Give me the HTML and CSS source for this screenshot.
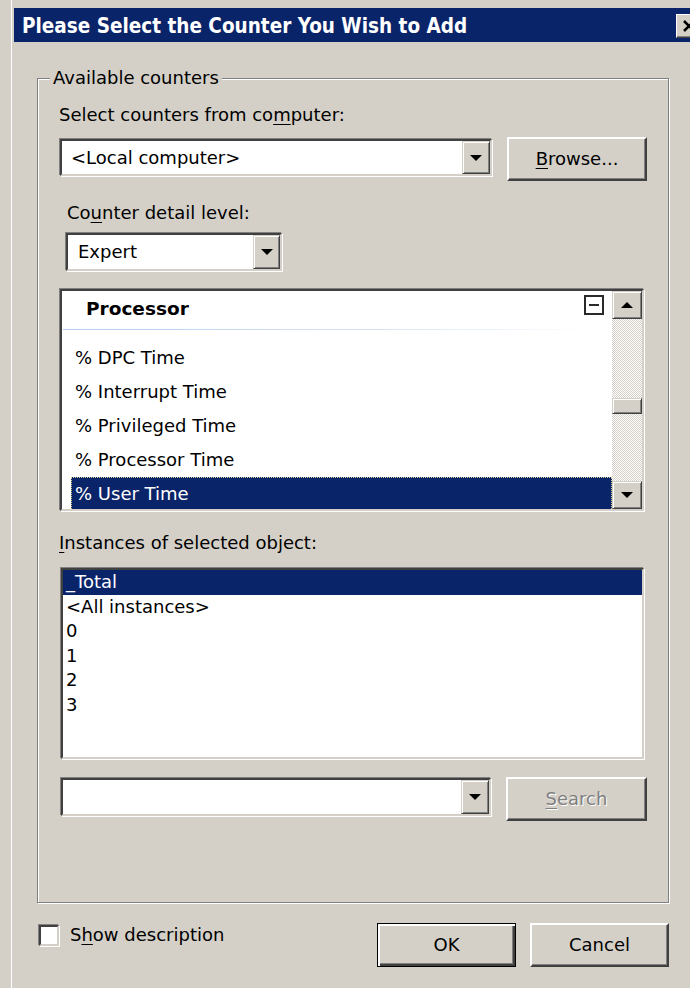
FILE: index.html
```html
<!DOCTYPE html>
<html>
<head>
<meta charset="utf-8">
<title>Add Counters</title>
<link rel="stylesheet" href="styles.css">
</head>
<body>
<div class="window">
  <div class="titlebar">
    <span class="title">Please Select the Counter You Wish to Add</span>
    <span class="close-btn">
      <svg width="14" height="12" viewBox="0 0 14 12"><path d="M2 1L12 11M12 1L2 11" stroke="#000" stroke-width="2.6" fill="none"/></svg>
    </span>
  </div>

  <div class="client">
    <fieldset class="group">
      <legend>Available counters</legend>

      <div class="label first">Select counters from co<u>m</u>puter:</div>
      <div class="row">
        <div class="combo sunken combo-machine">
          <span class="combo-text">&lt;Local computer&gt;</span>
          <span class="drop raised"><svg width="12" height="6" viewBox="0 0 12 6"><path d="M0 0H12L6 6Z"/></svg></span>
        </div>
        <div class="btn btn-browse"><u>B</u>rowse...</div>
      </div>

      <div class="label detail">Co<u>u</u>nter detail level:</div>
      <div class="combo sunken combo-level">
        <span class="combo-text">Expert</span>
        <span class="drop raised"><svg width="12" height="6" viewBox="0 0 12 6"><path d="M0 0H12L6 6Z"/></svg></span>
      </div>

      <div class="listbox sunken counters">
        <div class="list-body">
          <div class="obj-header">
            <span class="obj-name">Processor</span>
            <svg class="collapse" width="20" height="20" viewBox="0 0 20 20"><rect x="1" y="1" width="18" height="18" fill="#fff" stroke="#2a2a2a" stroke-width="2"/><path d="M5 10H15" stroke="#2a2a2a" stroke-width="2"/></svg>
          </div>
          <div class="obj-sep"></div>
          <div class="item">% DPC Time</div>
          <div class="item">% Interrupt Time</div>
          <div class="item">% Privileged Time</div>
          <div class="item">% Processor Time</div>
          <div class="item selected">% User Time</div>
        </div>
        <div class="vscroll">
          <span class="sb-btn raised"><svg width="12" height="6" viewBox="0 0 12 6"><path d="M6 0L12 6H0Z"/></svg></span>
          <div class="sb-track"><span class="sb-thumb raised"></span></div>
          <span class="sb-btn raised"><svg width="12" height="6" viewBox="0 0 12 6"><path d="M0 0H12L6 6Z"/></svg></span>
        </div>
      </div>

      <div class="label instances-label"><u>I</u>nstances of selected object:</div>
      <div class="listbox sunken instances">
        <div class="inst selected">_Total</div>
        <div class="inst">&lt;All instances&gt;</div>
        <div class="inst">0</div>
        <div class="inst">1</div>
        <div class="inst">2</div>
        <div class="inst">3</div>
      </div>

      <div class="row search-row">
        <div class="combo sunken combo-search">
          <span class="combo-text"></span>
          <span class="drop raised"><svg width="12" height="6" viewBox="0 0 12 6"><path d="M0 0H12L6 6Z"/></svg></span>
        </div>
        <div class="btn btn-search disabled"><u>S</u>earch</div>
      </div>
    </fieldset>

    <div class="footer">
      <div class="check">
        <span class="checkbox sunken"></span>
        <span class="check-label">S<u>h</u>ow description</span>
      </div>
      <div class="buttons">
        <div class="btn btn-default">OK</div>
        <div class="btn">Cancel</div>
      </div>
    </div>
  </div>
</div>
</body>
</html>
```

FILE: styles.css
```css
* {
  box-sizing: border-box;
}

html,
body {
  margin: 0;
}

body {
  width: 690px;
  height: 988px;
  overflow: hidden;
  background: #d4d0c8;
  color: #000;
  font-family: "DejaVu Sans", sans-serif;
  font-size: 18px;
  line-height: 20px;
}

u {
  text-decoration-thickness: 1px;
  text-underline-offset: 3px;
}

/* ---------- window frame ---------- */
.window {
  width: 697px;
  height: 988px;
  margin-left: 11px;
  padding: 8px 3px 0 2px;
  border-left: 1px solid #fff;
}

.titlebar {
  height: 34px;
  display: flex;
  align-items: center;
  padding: 1px 3px 0 8px;
  background: #0a246a;
}

.title {
  flex: 1;
  color: #fff;
  font-family: "DejaVu Sans Condensed", "DejaVu Sans", sans-serif;
  font-weight: bold;
  font-size: 20.5px;
  white-space: nowrap;
}

.close-btn {
  width: 26px;
  height: 24px;
  display: flex;
  align-items: center;
  justify-content: center;
  background: #d4d0c8;
  border: 1px solid;
  border-color: #fff #404040 #404040 #fff;
  box-shadow: inset -1px -1px #808080;
}

/* ---------- 3D edges ---------- */
.sunken {
  background: #fff;
  border: 2px solid;
  border-color: #404040 #d4d0c8 #d4d0c8 #404040;
  box-shadow: -1px -1px #808080, 1px 1px #fff;
}

.raised {
  background: #d4d0c8;
  border: 1px solid;
  border-color: #d4d0c8 #404040 #404040 #d4d0c8;
  box-shadow: inset 1px 1px #fff, inset -1px -1px #808080;
}

/* ---------- client area ---------- */
.client {
  padding: 26px 36px 0 23px;
}

.group {
  margin: 0;
  min-width: 0;
  padding: 0 21px 81px;
  border: 1px solid #808080;
  box-shadow: inset 1px 1px #fff, 1px 1px #fff;
}

.group legend {
  margin-left: -9px;
  padding: 0 3px;
  line-height: 20px;
  background: #d4d0c8;
}

.label.first {
  margin-top: 17px;
}

.label.detail {
  margin-top: 22px;
  margin-left: 8px;
}

.label.instances-label {
  margin-top: 22px;
}

.row {
  display: flex;
  align-items: flex-start;
  justify-content: space-between;
  margin-top: 12px;
}

/* ---------- combo boxes ---------- */
.combo {
  display: flex;
  align-items: stretch;
}

.combo-text {
  flex: 1;
  display: flex;
  align-items: center;
  padding-left: 9px;
  white-space: nowrap;
}

.drop {
  width: 28px;
  display: flex;
  align-items: center;
  justify-content: center;
}

.combo-machine {
  width: 432px;
  height: 37px;
  margin: 2px 0 0 1px;
}

.combo-level {
  width: 216px;
  height: 38px;
  margin: 10px 0 0 7px;
}

.combo-level .combo-text {
  padding-left: 10px;
}

.combo-level .drop {
  width: 27px;
}

.combo-search {
  width: 430px;
  height: 38px;
  margin: 1px 0 0 2px;
}

/* ---------- push buttons ---------- */
.btn {
  height: 44px;
  width: 139px;
  display: flex;
  align-items: center;
  justify-content: center;
  background: #d4d0c8;
  border: 2px solid;
  border-color: #fff #404040 #404040 #fff;
  box-shadow: inset -1px -1px #808080;
  white-space: nowrap;
}

.btn-browse {
  width: 140px;
}

.btn-search {
  width: 141px;
}

.btn.disabled {
  color: #808080;
  text-shadow: 1px 1px #fff;
}

.btn-default {
  border: 1px solid #000;
  box-shadow: inset 2px 2px #fff, inset -2px -2px #404040, inset -3px -3px #808080;
}

/* ---------- counter list ---------- */
.listbox {
  overflow: hidden;
}

.counters {
  display: flex;
  width: 584px;
  height: 222px;
  margin: 18px 0 0 1px;
}

.list-body {
  flex: 1;
  min-width: 0;
  overflow: hidden;
}

.obj-header {
  height: 36px;
  display: flex;
  align-items: center;
  padding: 0 8px 0 24px;
}

.obj-name {
  flex: 1;
  font-weight: bold;
  font-size: 18.5px;
}

.collapse {
  align-self: flex-start;
  margin-top: 4px;
}

.obj-sep {
  height: 1px;
  margin: 2px 17px 0 1px;
  background: linear-gradient(to right, #b5cdef, #d8e5f7 60%, #fff);
}

.obj-sep + .item {
  margin-top: 11px;
}

.item {
  height: 34px;
  display: flex;
  align-items: center;
  margin-left: 9px;
  padding-left: 4px;
  white-space: nowrap;
}

.item.selected {
  background: #0a246a;
  color: #fff;
  outline: 1px dotted #d8cf8c;
  outline-offset: -1px;
}

.vscroll {
  width: 30px;
  display: flex;
  flex-direction: column;
}

.sb-btn {
  height: 28px;
  display: flex;
  align-items: center;
  justify-content: center;
}

.sb-track {
  flex: 1;
  padding-top: 79px;
  background: repeating-conic-gradient(#d4d0c8 0 25%, #fff 0 50%) 0 0 / 2px 2px;
}

.sb-thumb {
  display: block;
  height: 16px;
}

/* ---------- instance list ---------- */
.instances {
  width: 583px;
  height: 191px;
  margin: 15px 0 0 2px;
}

.inst {
  height: 24.6px;
  line-height: 24.6px;
  padding-left: 3px;
  white-space: nowrap;
}

.inst.selected {
  background: #0a246a;
  color: #fff;
}

.search-row {
  margin-top: 18px;
}

/* ---------- footer ---------- */
.footer {
  display: flex;
  align-items: flex-start;
  justify-content: space-between;
  margin-top: 20px;
}

.check {
  display: flex;
  align-items: center;
  height: 22px;
  margin: 1px 0 0 2px;
}

.checkbox {
  width: 20px;
  height: 21px;
  margin-right: 11px;
}

.buttons {
  display: flex;
  gap: 14px;
}
```
